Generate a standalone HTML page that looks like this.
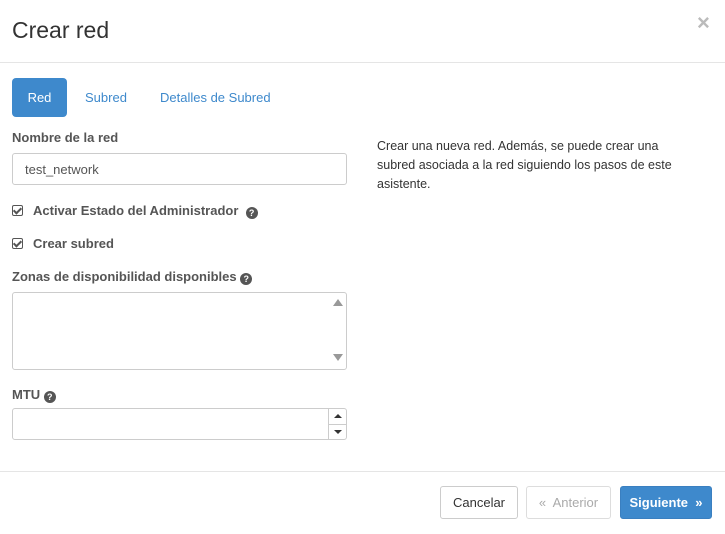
<!DOCTYPE html>
<html><head><style>
*{box-sizing:border-box;margin:0;padding:0}
body{width:725px;height:534px;background:#fff;font-family:"Liberation Sans",sans-serif;font-size:13px;color:#333;position:relative;overflow:hidden}
.abs{position:absolute}
.lbl{font-weight:bold;color:#555;font-size:13px}
.q{display:inline-block;width:12px;height:12px;border-radius:50%;background:#555;color:#fff;font-size:9px;line-height:12px;text-align:center;font-weight:bold;vertical-align:-1px}
.inp{border:1px solid #ccc;border-radius:3px;background:#fff}
.btn{position:absolute;border:1px solid #ccc;border-radius:3px;height:33px;line-height:31px;text-align:center;font-size:13px}
.cb{display:inline-block;width:11px;height:11px;border:1px solid #555;border-radius:2px;position:relative;margin-right:10px;vertical-align:-1px}
.cb:after{content:"";position:absolute;left:2px;top:0px;width:3px;height:6px;border:solid #555;border-width:0 2px 2px 0;transform:rotate(45deg)}
</style></head><body>
<div class="abs" style="left:12px;top:17px;font-size:23px;color:#333">Crear red</div>
<div class="abs" style="left:697px;top:10px;font-size:22px;color:#bbb;font-weight:bold">×</div>
<div class="abs" style="left:0;top:62px;width:725px;height:1px;background:#e5e5e5"></div>
<div class="abs" style="left:12px;top:78px;width:55px;height:39px;background:#3e89cc;border-radius:4px;color:#fff;line-height:39px;text-align:center">Red</div>
<div class="abs" style="left:85px;top:90px;color:#3e89cc">Subred</div>
<div class="abs" style="left:160px;top:90px;color:#3e89cc">Detalles de Subred</div>
<div class="abs lbl" style="left:12px;top:130px">Nombre de la red</div>
<div class="abs inp" style="left:12px;top:153px;width:335px;height:32px;padding:8px 12px;color:#555">test_network</div>
<div class="abs lbl" style="left:12px;top:203px"><span class="cb"></span>Activar Estado del Administrador &nbsp;<span class="q">?</span></div>
<div class="abs lbl" style="left:12px;top:236px"><span class="cb"></span>Crear subred</div>
<div class="abs lbl" style="left:12px;top:269px">Zonas de disponibilidad disponibles <span class="q">?</span></div>
<div class="abs inp" style="left:12px;top:292px;width:335px;height:78px"></div>
<div class="abs" style="left:333px;top:299px;width:0;height:0;border-left:5px solid transparent;border-right:5px solid transparent;border-bottom:7px solid #999"></div>
<div class="abs" style="left:333px;top:354px;width:0;height:0;border-left:5px solid transparent;border-right:5px solid transparent;border-top:7px solid #999"></div>
<div class="abs lbl" style="left:12px;top:387px">MTU <span class="q">?</span></div>
<div class="abs inp" style="left:12px;top:408px;width:335px;height:32px"></div>
<div class="abs" style="left:328px;top:409px;width:18px;height:30px;border-left:1px solid #ccc"></div>
<div class="abs" style="left:328px;top:424px;width:18px;height:1px;background:#ccc"></div>
<div class="abs" style="left:334px;top:414px;border-left:4px solid transparent;border-right:4px solid transparent;border-bottom:4px solid #333"></div>
<div class="abs" style="left:334px;top:430px;border-left:4px solid transparent;border-right:4px solid transparent;border-top:4px solid #333"></div>
<div class="abs" style="left:377px;top:137px;width:318px;line-height:19px;font-size:12.5px;color:#333">Crear una nueva red. Además, se puede crear una subred asociada a la red siguiendo los pasos de este asistente.</div>
<div class="abs" style="left:0;top:471px;width:725px;height:1px;background:#e5e5e5"></div>
<div class="btn" style="left:440px;top:486px;width:78px;color:#333">Cancelar</div>
<div class="btn" style="left:526px;top:486px;width:85px;color:#aaa;border-color:#ddd">«&nbsp; Anterior</div>
<div class="btn" style="left:620px;top:486px;width:92px;background:#3e89cc;border-color:#3a7fc0;color:#fff;font-weight:bold">Siguiente &nbsp;»</div>
</body></html>
